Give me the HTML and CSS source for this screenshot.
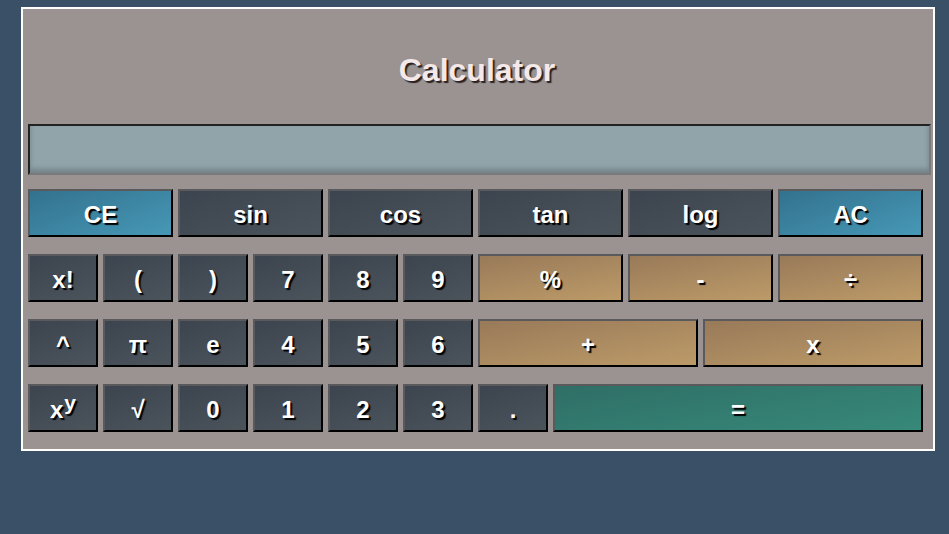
FILE: index.html
```html
<!DOCTYPE html>
<html>
<head>
<meta charset="utf-8">
<link rel="stylesheet" href="styles.css">
</head>
<body>
<div class="calc">
  <div class="header"><h1 class="title">Calculator</h1></div>
  <div class="display"></div>
  <div class="keys">
    <button class="key w2 blue">CE</button>
    <button class="key w2">sin</button>
    <button class="key w2">cos</button>
    <button class="key w2">tan</button>
    <button class="key w2">log</button>
    <button class="key w2 blue">AC</button>

    <button class="key">x!</button>
    <button class="key">(</button>
    <button class="key">)</button>
    <button class="key">7</button>
    <button class="key">8</button>
    <button class="key">9</button>
    <button class="key w2 tan">%</button>
    <button class="key w2 tan">-</button>
    <button class="key w2 tan">÷</button>

    <button class="key">^</button>
    <button class="key">π</button>
    <button class="key">e</button>
    <button class="key">4</button>
    <button class="key">5</button>
    <button class="key">6</button>
    <button class="key w3 tan">+</button>
    <button class="key w3 tan">x</button>

    <button class="key">x<span class="sup">y</span></button>
    <button class="key">√</button>
    <button class="key">0</button>
    <button class="key">1</button>
    <button class="key">2</button>
    <button class="key">3</button>
    <button class="key">.</button>
    <button class="key w5 teal">=</button>
  </div>
</div>
</body>
</html>
```

FILE: styles.css
```css
html, body {
  margin: 0;
  padding: 0;
}
body {
  background: #3a5067;
  width: 949px;
  height: 534px;
  overflow: hidden;
  padding: 7px 0 0 21px;
  box-sizing: border-box;
  font-family: "Liberation Sans", Arial, sans-serif;
}
.calc {
  width: 914px;
  height: 444px;
  box-sizing: border-box;
  border: 2px solid #ffffff;
  background: #9b9391;
  padding: 0 5px;
}
.header {
  height: 115px;
  display: flex;
  align-items: center;
  justify-content: center;
  padding-top: 7px;
  box-sizing: border-box;
}
.title {
  margin: 0;
  font-size: 32px;
  font-weight: bold;
  color: #f4e8e8;
  text-shadow: 2px 2px 1px #2a2222;
  padding-right: 2px;
}
.display {
  width: 903px;
  height: 51px;
  box-sizing: border-box;
  background: #91a4aa;
  border: 2px solid;
  border-color: #222222 #7a7a7a #7a7a7a #222222;
  box-shadow: inset 0 -4px 5px rgba(60, 70, 75, 0.35);
}
.keys {
  margin-top: 14px;
  width: 895px;
  display: grid;
  grid-template-columns: repeat(12, 70px);
  grid-auto-rows: 48px;
  column-gap: 5px;
  row-gap: 17px;
}
.key {
  box-sizing: border-box;
  margin: 0;
  padding: 3px 0 0;
  border: 2px solid;
  border-color: #5a5a5c #000000 #000000 #5a5a5c;
  background: linear-gradient(160deg, #3c444f 0%, #4b535b 100%);
  color: #ffffff;
  font-family: "Liberation Sans", Arial, sans-serif;
  font-weight: bold;
  font-size: 24px;
  text-shadow: 2px 2px 1px #000000;
  display: flex;
  align-items: center;
  justify-content: center;
}
.w2 { grid-column: span 2; }
.w3 { grid-column: span 3; }
.w5 { grid-column: span 5; }
.blue {
  background: linear-gradient(160deg, #33728e 0%, #4698b6 100%);
}
.tan {
  background: linear-gradient(170deg, #997a59 0%, #bc9a68 100%);
}
.teal {
  background: linear-gradient(170deg, #2f6e66 0%, #37897a 100%);
}
.sup {
  font-size: 21px;
  position: relative;
  top: -7px;
  margin-left: 1px;
}
```
